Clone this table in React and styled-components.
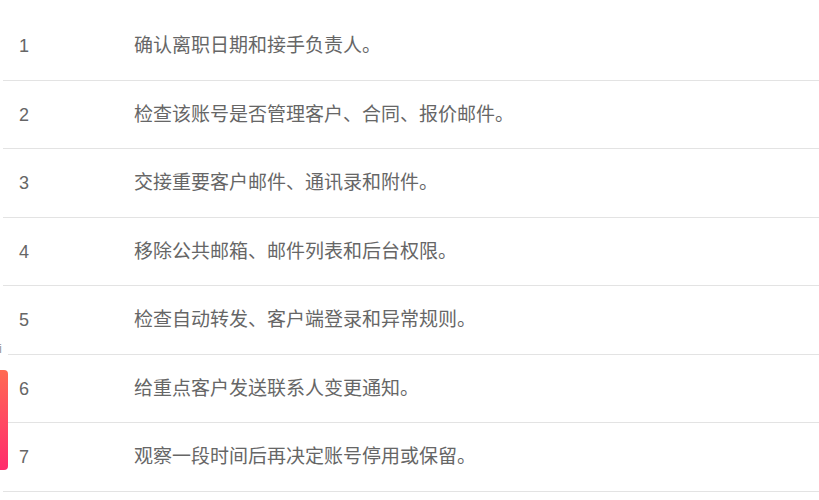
import styled, { createGlobalStyle } from "styled-components";

const GlobalStyle = createGlobalStyle`
  html, body {
    margin: 0;
    padding: 0;
    background: #fff;
  }
  body {
    font-family: "Liberation Sans", "Noto Sans CJK SC", sans-serif;
  }
`;

const steps = [
  "确认离职日期和接手负责人。",
  "检查该账号是否管理客户、合同、报价邮件。",
  "交接重要客户邮件、通讯录和附件。",
  "移除公共邮箱、邮件列表和后台权限。",
  "检查自动转发、客户端登录和异常规则。",
  "给重点客户发送联系人变更通知。",
  "观察一段时间后再决定账号停用或保留。",
];

const Page = () => (
  <Wrapper>
    <Table>
      <tbody>
        {steps.map((text, i) => (
          <Row key={i}>
            <NumCell>{i + 1}</NumCell>
            <TextCell>{text}</TextCell>
          </Row>
        ))}
      </tbody>
    </Table>
    <SideHint>i</SideHint>
    <SideTab />
  </Wrapper>
);

const Wrapper = styled.section`
  position: relative;
  width: 819px;
  height: 500px;
  overflow: hidden;
  padding: 11.5px 0 0 3px;
  box-sizing: border-box;
`;

const Table = styled.table`
  width: 816px;
  border-collapse: collapse;
  color: #666;
`;

const Row = styled.tr`
  height: 68.5px;
  border-bottom: 1px solid #e3e3e3;
`;

const NumCell = styled.td`
  width: 131px;
  box-sizing: border-box;
  padding: 2px 0 0 16px;
  font-family: "Liberation Sans", Arial, sans-serif;
  font-size: 18px;
  vertical-align: middle;
`;

const TextCell = styled.td`
  padding: 0 0 4px 0;
  font-family: "Noto Sans CJK SC", "Liberation Sans", sans-serif;
  font-size: 19px;
  vertical-align: middle;
`;

const SideHint = styled.span`
  position: absolute;
  left: 0;
  top: 342px;
  width: 8px;
  height: 14px;
  background: #fff;
  color: #999;
  font-family: "Liberation Sans", sans-serif;
  font-size: 13px;
  line-height: 14px;
  text-indent: -1px;
`;

const SideTab = styled.div`
  position: absolute;
  left: 0;
  top: 370px;
  width: 8px;
  height: 100px;
  border-radius: 0 4px 4px 0;
  background: linear-gradient(180deg, #ff6a52 0%, #ff4a62 50%, #ff2c6c 100%);
`;

const App = () => (
  <>
    <GlobalStyle />
    <Page />
  </>
);

export default App;
